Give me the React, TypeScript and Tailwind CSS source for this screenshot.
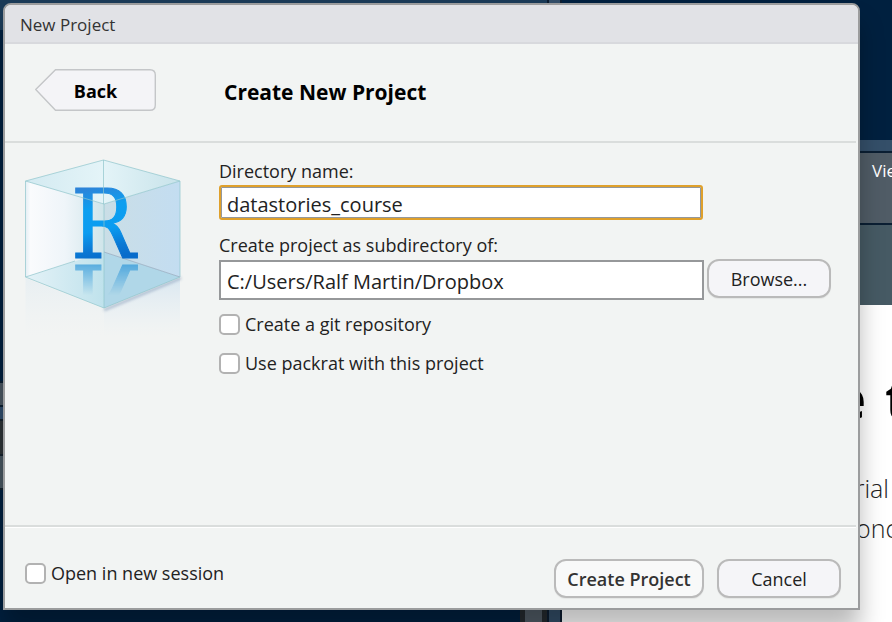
import { useState } from "react";

function CubeLogo() {
  return (
    <svg viewBox="0 0 168 190" className="h-[190px] w-[168px] shrink-0" role="img" aria-label="R project">
      <defs>
        <linearGradient id="leftFace" x1="0" x2="1" y1="0" y2="0">
          <stop offset="0" stopColor="#e3eef4" />
          <stop offset="0.06" stopColor="#fafbfd" />
          <stop offset="0.5" stopColor="#eff5f9" />
          <stop offset="1" stopColor="#cfe5ea" />
        </linearGradient>
        <linearGradient id="rightFace" x1="0" x2="1" y1="0" y2="0">
          <stop offset="0" stopColor="#cadee6" />
          <stop offset="1" stopColor="#c3ddf1" />
        </linearGradient>
        <linearGradient id="topFace" x1="0" x2="1" y1="0" y2="0">
          <stop offset="0" stopColor="#d3eaf1" />
          <stop offset="0.5" stopColor="#e4f4f8" />
          <stop offset="1" stopColor="#c8e3ea" />
        </linearGradient>
        <linearGradient id="floorLeft" x1="0" x2="1" y1="0" y2="0">
          <stop offset="0" stopColor="#e4f2f7" />
          <stop offset="1" stopColor="#bfe2ec" />
        </linearGradient>
        <linearGradient id="letter" gradientUnits="userSpaceOnUse" x1="70" x2="85" y1="32" y2="104">
          <stop offset="0" stopColor="#2d83d8" />
          <stop offset="0.3" stopColor="#0d9ff0" />
          <stop offset="0.6" stopColor="#0b9cf0" />
          <stop offset="0.85" stopColor="#0a78d4" />
          <stop offset="1" stopColor="#086ccb" />
        </linearGradient>
        <linearGradient id="fade" gradientUnits="userSpaceOnUse" x1="0" x2="0" y1="108" y2="140">
          <stop offset="0" stopColor="#fff" stopOpacity="0.7" />
          <stop offset="1" stopColor="#fff" stopOpacity="0" />
        </linearGradient>
        <linearGradient id="below" gradientUnits="userSpaceOnUse" x1="0" x2="0" y1="120" y2="182">
          <stop offset="0" stopColor="#cfe2f0" stopOpacity="0.75" />
          <stop offset="1" stopColor="#e3edf4" stopOpacity="0" />
        </linearGradient>
        <mask id="reflection" maskUnits="userSpaceOnUse" x="0" y="104" width="168" height="60">
          <rect x="0" y="104" width="168" height="60" fill="url(#fade)" />
        </mask>
        <filter id="soft" x="-20%" y="-20%" width="140%" height="140%">
          <feGaussianBlur stdDeviation="1.5" />
        </filter>
      </defs>
      <path d="M5.5 123 84 154V185H5.5Z" fill="url(#below)" opacity="0.4" />
      <path d="M84 154 160 123V185H84Z" fill="url(#below)" />
      <path d="M84 155 161 123" stroke="#8297b5" strokeWidth="2" filter="url(#soft)" opacity="0.7" />
      <path d="M5.5 26 84 49V97L5.5 122Z" fill="url(#leftFace)" />
      <path d="M84 49 160 26V122L84 97Z" fill="url(#rightFace)" />
      <path d="M83.5 5 160 26 84 49 5.5 26Z" fill="url(#topFace)" />
      <path d="M84 97 5.5 122 84 153Z" fill="url(#floorLeft)" />
      <path d="M84 97 160 122 84 153Z" fill="#b0d7e8" />
      <path d="M84 97 160 122" stroke="#8d9fb5" strokeWidth="1" opacity="0.6" />
      <g mask="url(#reflection)">
        <text x="51" y="-110" transform="scale(1 -1)" fontFamily="DejaVu Serif Condensed, DejaVu Serif, serif" fontSize="95" fill="#2492d8" stroke="#2492d8" strokeWidth="1">R</text>
      </g>
      <text x="51" y="103" fontFamily="DejaVu Serif Condensed, DejaVu Serif, serif" fontSize="95" fill="url(#letter)" stroke="url(#letter)" strokeWidth="1">R</text>
      <path d="M83.5 5 160 26 84 49 5.5 26Z M83.5 5V49M84 49V153M5.5 26V122L84 153 160 122V26M5.5 122 55 106" fill="none" stroke="#8fc5cc" strokeWidth="1" opacity="0.7" />
    </svg>
  );
}

function Check({ id, label }: { id: string; label: string }) {
  return (
    <div className="flex h-6 items-center gap-[5px]">
      <input id={id} type="checkbox" className="size-[21px] shrink-0 appearance-none rounded-[5px] border-2 border-[#b2b2b2] bg-white checked:bg-[#3b83bd]" />
      <label htmlFor={id}>{label}</label>
    </div>
  );
}

const button = "h-[39px] rounded-xl border-2 border-[#bababa] shadow-[0_1px_1px_rgba(0,0,0,0.06)]";

function Backdrop() {
  return (
    <div aria-hidden="true" className="absolute inset-0 flex bg-[#00203f]">
      <div className="flex flex-1 flex-col">
        <div className="h-[30px] bg-[#1b3b58]" />
        <div className="h-[351px]" />
        <div className="h-[26px] border-y-2 border-[#0b1f31] bg-[#4a5762]" />
        <div className="h-[12px] bg-[#304d6c]" />
        <div className="h-[37px] border-y-2 border-[#15222d] bg-[#2d3336]" />
        <div className="h-[34px] border-b-2 border-[#15222d] bg-[#485660]" />
        <div className="flex flex-1 justify-end">
          <div className="w-[27px] border-x-[5px] border-[#252b30] bg-[#515c66]" />
        </div>
      </div>
      <div className="w-[15px] border-x-2 border-[#0c1d30] bg-[#334e68]" />
      <div className="flex w-[330px] flex-col">
        <div className="h-[140px]" />
        <div className="h-[11px] bg-[#344f69]" />
        <div className="flex h-[74px] justify-end overflow-hidden border-y-2 border-[#0b1f33] bg-[#505c66] pt-1.5 text-[17px] leading-6 text-white">
          <span className="w-5 whitespace-nowrap">View</span>
        </div>
        <div className="h-20 bg-[#465a64]" />
        <div className="flex flex-1 flex-col items-end overflow-hidden bg-white pt-14 text-[#222]">
          <p className="flex h-[72px] items-center gap-[19px] text-[56px] font-bold leading-[72px] text-black"><span>e</span><span className="w-[7px]">t</span></p>
          <p className="mt-[35px] h-10 pr-[3px] text-[25px] font-light leading-10">material</p>
          <p className="h-10 w-[36px] whitespace-nowrap text-[25px] font-light leading-10">onc</p>
        </div>
      </div>
    </div>
  );
}

export default function App() {
  const [name, setName] = useState("datastories_course");
  const [parent, setParent] = useState("C:/Users/Ralf Martin/Dropbox");
  return (
    <main className="relative flex min-h-screen overflow-hidden pt-[3px] pr-8 pb-3 pl-[3px] font-['Open_Sans','Noto_Sans',sans-serif] text-[18px] leading-6 text-[#222]">
      <Backdrop />
      <section role="dialog" aria-labelledby="title" className="relative flex flex-1 flex-col overflow-hidden rounded-t-lg border-2 border-[#9b9c9d] bg-[#f2f4f3] shadow-[0_20px_24px_rgba(0,0,0,0.27)]">
        <div id="title" className="h-[39px] border-b-2 border-[#d8d9dd] bg-[#e1e2e6] px-[15px] pt-2 text-[17px] text-[#333]">New Project</div>
        <header className="mr-0.5 flex h-[99px] items-center border-b-2 border-[#dadddc] pb-1.5">
          <button type="button" className="relative ml-[30px] h-[42px] w-[121px] text-[18px] font-bold text-black">
            <svg viewBox="0 0 121 42" className="absolute inset-0 size-full" aria-hidden="true">
              <path d="M.7 20.5 20.5.7H115Q120.3.7 120.3 6V36Q120.3 41.3 115 41.3H20.5Z" fill="#f4f4f7" stroke="#c4c6c8" strokeWidth="1.4" />
            </svg>
            <span className="relative block pt-0.5">Back</span>
          </button>
          <h1 className="ml-[68px] pt-1 text-[21px] font-bold text-black">Create New Project</h1>
        </header>
        <div className="flex flex-1 gap-[31px] pt-3 pr-[27px] pl-[15px]">
          <CubeLogo />
          <form className="grid flex-1 grid-cols-[1fr_124px] content-start gap-x-[3px] pt-1">
            <label htmlFor="name" className="col-span-2">Directory name:</label>
            <input id="name" value={name} onChange={(e) => setName(e.target.value)} className="mt-0.5 mr-px h-[35px] rounded-[3px] border-2 border-[#dfa02b] bg-white px-1.5 pt-1 text-[20px] shadow-[inset_0_0_0_1px_#94989c] outline-none" />
            <label htmlFor="parent" className="col-span-2 mt-[13px]">Create project as subdirectory of:</label>
            <input id="parent" value={parent} onChange={(e) => setParent(e.target.value)} className="mt-[3px] h-10 min-w-0 border-2 border-[#96989a] bg-white px-1.5 pt-0.5 text-[20px] outline-none" />
            <button type="button" className={`${button} mt-0.5 bg-[#f5f5f8]`}>Browse...</button>
            <div className="col-span-2 mt-3 flex flex-col gap-[15px]">
              <Check id="git" label="Create a git repository" />
              <Check id="packrat" label="Use packrat with this project" />
            </div>
          </form>
        </div>
        <footer className="mr-0.5 flex h-[83px] justify-between border-t-2 border-[#dadddc] pt-[32px] pr-[15px] pl-[20px] shadow-[inset_0_1px_0_#fff]">
          <div className="pt-0.5"><Check id="session" label="Open in new session" /></div>
          <div className="flex gap-[13px]">
            <button type="button" className={`${button} w-[150px] bg-[#f8f9f9] font-semibold text-[#333]`}>Create Project</button>
            <button type="button" className={`${button} w-[124px] bg-[#f5f5f8]`}>Cancel</button>
          </div>
        </footer>
      </section>
    </main>
  );
}
